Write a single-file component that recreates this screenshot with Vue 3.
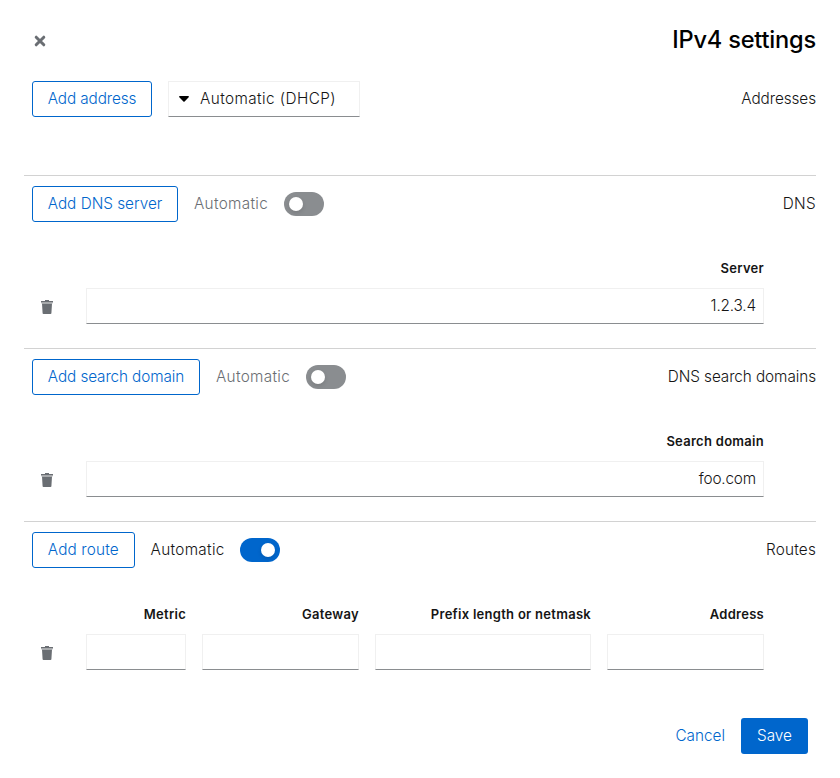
<script setup>
import { reactive } from 'vue'

const sections = reactive([
  {
    id: 'dns', title: 'DNS', add: 'Add DNS server', auto: false,
    fields: [{ label: 'Server', value: '1.2.3.4' }],
  },
  {
    id: 'search', title: 'DNS search domains', add: 'Add search domain', auto: false,
    fields: [{ label: 'Search domain', value: 'foo.com' }],
  },
  {
    id: 'routes', title: 'Routes', add: 'Add route', auto: true,
    fields: [
      { label: 'Metric', value: '' },
      { label: 'Gateway', value: '' },
      { label: 'Prefix length or netmask', value: '' },
      { label: 'Address', value: '' },
    ],
  },
])
</script>

<template>
  <main class="dialog">
    <header class="header">
      <button class="close" aria-label="Close">
        <svg width="12" height="12" viewBox="0 0 12 12">
          <path d="M2.2 2.2 9.8 9.8M9.8 2.2 2.2 9.8" />
        </svg>
      </button>
      <h1>IPv4 settings</h1>
    </header>

    <section class="section addresses">
      <div class="toolbar">
        <button class="btn outline address">Add address</button>
        <button class="select">
          <svg width="10" height="6" viewBox="0 0 10 6"><path d="M.9 0h8.2c.8 0 1.1.8.6 1.3L5.6 5.5a.9.9 0 0 1-1.2 0L.3 1.3C-.2.8.1 0 .9 0z" /></svg>
          <span>Automatic (DHCP)</span>
        </button>
        <h2 class="addresses-title">Addresses</h2>
      </div>
    </section>

    <section v-for="s in sections" :key="s.id" class="section" :class="s.id">
      <div class="toolbar">
        <button class="btn outline">{{ s.add }}</button>
        <span class="auto" :class="{ on: s.auto }">Automatic</span>
        <button class="switch" :class="{ on: s.auto }" role="switch" :aria-checked="s.auto" @click="s.auto = !s.auto"></button>
        <h2>{{ s.title }}</h2>
      </div>
      <div class="row">
        <button class="remove" aria-label="Remove">
          <svg width="12" height="14" viewBox="0 0 12 14">
            <path d="M4 0h4v1h4v1.5H0V1h4z" />
            <path d="M0 2.5h12V3.5H0z" opacity=".35" />
            <path d="M1 3.5h10l-.6 9.7c0 .5-.4.8-.9.8h-7c-.5 0-.9-.3-.9-.8z" />
          </svg>
        </button>
        <label v-for="f in s.fields" :key="f.label" class="field">
          <span>{{ f.label }}</span>
          <input v-model="f.value" type="text" />
        </label>
      </div>
    </section>

    <footer class="footer">
      <button class="link">Cancel</button>
      <button class="btn primary">Save</button>
    </footer>
  </main>
</template>

<style>
body {
  margin: 0;
  background: #fff;
}
</style>

<style scoped>
.dialog {
  box-sizing: border-box;
  width: 840px;
  height: 778px;
  padding: 24px 24px 0;
  color: #151515;
  font-family: Inter, "Liberation Sans", sans-serif;
  font-size: 15.3px;
  font-weight: 300;
  line-height: 24px;
}
button, input {
  box-sizing: border-box;
  margin: 0;
  padding: 0;
  border: 0;
  border-radius: 0;
  outline: 0;
  background: none;
  color: inherit;
  font: inherit;
  letter-spacing: inherit;
}
svg {
  display: block;
}
.header {
  display: flex;
  align-items: center;
  justify-content: space-between;
  height: 32px;
  padding-left: 10px;
}
.close {
  padding-top: 2px;
}
.close path {
  fill: none;
  stroke: #6a6e73;
  stroke-width: 3;
  stroke-linecap: round;
}
h1, h2 {
  margin: 0;
  font-weight: inherit;
  white-space: nowrap;
}
h1 {
  color: #000;
  font-size: 23.6px;
  font-weight: 450;
  letter-spacing: -0.2px;
  line-height: 32px;
}
h2 {
  margin-left: auto;
  font-size: inherit;
  letter-spacing: -0.07px;
}
.dns h2 { letter-spacing: 0.3px; }
.routes h2 { letter-spacing: 0.2px; }
.section {
  box-sizing: border-box;
  height: 173px;
  padding-top: 10px;
  border-top: 1px solid #d2d2d2;
}
.section.addresses {
  height: 119px;
  padding-top: 25px;
  border: 0;
}
.toolbar {
  display: flex;
  align-items: center;
  gap: 16px;
  height: 36px;
  padding-left: 8px;
}
.btn {
  height: 36px;
  border-radius: 3px;
  white-space: nowrap;
}
.outline {
  border: 1px solid #06c;
  color: #06c;
}
.address {
  width: 120px;
  letter-spacing: -0.1px;
}
.dns .outline { width: 146px; }
.search .outline {
  width: 168px;
  letter-spacing: -0.1px;
}
.routes .outline {
  width: 102.6px;
  letter-spacing: 0.15px;
}
.select {
  display: flex;
  align-items: center;
  gap: 11px;
  width: 192px;
  height: 36px;
  padding-left: 10px;
  border: 1px solid #f0f0f0;
  border-bottom-color: #8a8d90;
  letter-spacing: 0.42px;
  white-space: nowrap;
}
.auto {
  width: 73.8px;
  color: #6a6e73;
  letter-spacing: 0.32px;
  white-space: nowrap;
}
.auto.on { color: #151515; }
.switch {
  display: flex;
  align-items: center;
  width: 40px;
  height: 24px;
  padding: 0 5px;
  border-radius: 12px;
  background: #8a8d90;
}
.switch::before {
  content: "";
  width: 14px;
  height: 14px;
  border-radius: 50%;
  background: #fff;
  box-shadow: 0 2px 4px rgba(3, 3, 3, 0.12);
}
.switch.on {
  justify-content: flex-end;
  background: #06c;
}
.row {
  display: grid;
  grid-template-columns: 46px 678px;
  column-gap: 16px;
  margin-top: 34px;
}
.routes .row {
  grid-template-columns: 46px 100px 157px 216px 157px;
}
.remove {
  display: flex;
  justify-content: center;
  height: 14px;
  margin-top: 44px;
  fill: #6a6e73;
}
.field {
  display: grid;
  grid-template-rows: 24px 36px;
  row-gap: 8px;
  text-align: right;
}
.field span {
  font-size: 13px;
  font-weight: 600;
  letter-spacing: 0.28px;
  white-space: nowrap;
}
.field input {
  width: 100%;
  padding: 0 7px;
  border: 1px solid #f0f0f0;
  border-bottom-color: #8a8d90;
  letter-spacing: -0.15px;
  text-align: right;
}
.footer {
  display: flex;
  align-items: center;
  justify-content: flex-end;
  gap: 16px;
  margin-top: 24px;
  padding-right: 8px;
}
.link { color: #06c; }
.primary {
  width: 67px;
  background: #06c;
  color: #fff;
}
</style>
